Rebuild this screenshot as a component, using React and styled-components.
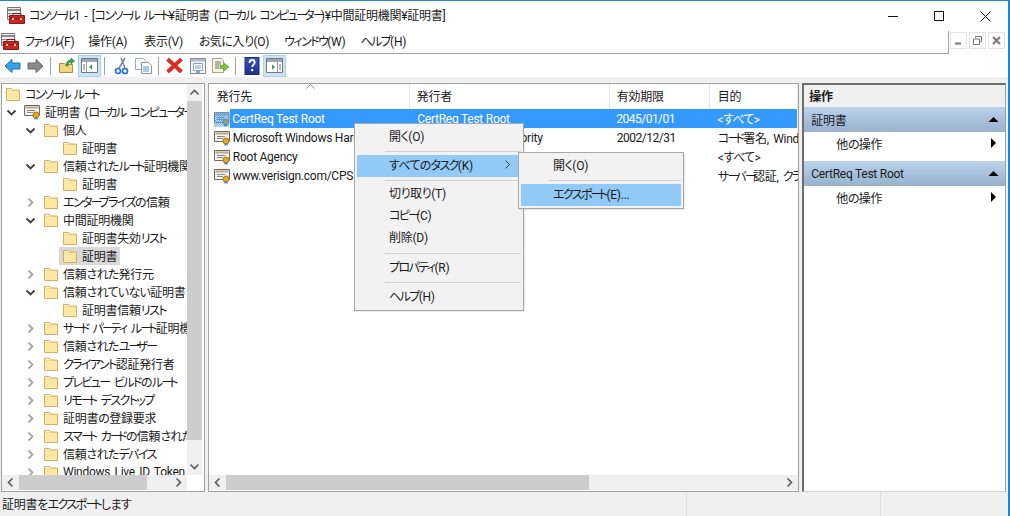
import React from 'react';
import styled, { createGlobalStyle } from 'styled-components';

const GlobalStyle = createGlobalStyle`
  html, body {
    margin: 0;
    padding: 0;
    overflow: hidden;
    background: #fff;
  }
`;

const Window = styled.div`
  position: relative;
  box-sizing: border-box;
  width: 1010px;
  height: 516px;
  display: flex;
  flex-direction: column;
  overflow: hidden;
  background: #fff;
  border-top: 1px solid #1a8ad4;
  border-right: 2px solid #1a8ad4;
  font-family: Roboto, "Noto Sans CJK JP", sans-serif;
  font-size: 12px;
  font-feature-settings: "palt";
  letter-spacing: -0.25px;
  color: #1a1a1a;
  white-space: nowrap;
`;

const JpText = styled.span`
  word-spacing: 1.5px;
`;

const Kana = styled.span`
  letter-spacing: ${(p) => p.$sp}px;
`;

// Meiryo UI has much narrower kana than its kanji, so kana runs get tightened
const Jp = ({ children }) => (
  <JpText>
    {children.split(/(ー+|[\u30A0-\u30FB\u30FD-\u30FF]+|[\u3040-\u309F]+)/).map((part, i, all) => {
      if (part[0] === 'ー') {
        const beforeSpace = all[i + 1] && all[i + 1][0] === ' ';
        return <Kana key={i} $sp={beforeSpace ? -1.5 : -4}>{part}</Kana>;
      }
      if (/^[\u30A0-\u30FF]/.test(part)) return <Kana key={i} $sp={-1.6}>{part}</Kana>;
      if (/^[\u3040-\u309F]/.test(part)) return <Kana key={i} $sp={-0.7}>{part}</Kana>;
      return part;
    })}
  </JpText>
);

const TitleBar = styled.div`
  height: 30px;
  flex: none;
  display: flex;
  align-items: center;
  padding-left: 7px;
`;

const TitleText = styled.div`
  flex: 1;
  padding: 0 0 3px 4px;
`;

const WinButton = styled.div`
  width: 46px;
  height: 30px;
  display: flex;
  align-items: center;
  justify-content: center;
`;

const MenuBar = styled.div`
  height: 22px;
  flex: none;
  display: flex;
  align-items: center;
  border-bottom: 1px solid #a0a0aa;
  margin-right: 59px;
  border-right: 1px solid #a0a0aa;
  padding-left: 1px;
  position: relative;
`;

const MenuItem = styled.div`
  margin-left: ${(p) => p.$gap}px;
  padding-bottom: 3px;
`;

const MdiButtons = styled.div`
  position: absolute;
  right: -57px;
  top: 1px;
  display: flex;
  gap: 2px;
`;

const MdiButton = styled.div`
  box-sizing: border-box;
  width: 17px;
  height: 17px;
  border: 1px solid #e4e4e4;
  display: flex;
  align-items: center;
  justify-content: center;
`;

const Toolbar = styled.div`
  height: 23px;
  flex: none;
  display: flex;
  align-items: center;
  padding-left: 1px;
`;

const ToolButton = styled.div`
  box-sizing: border-box;
  width: 23px;
  height: 22px;
  display: flex;
  align-items: center;
  justify-content: center;
  ${(p) => p.$active && 'background: #cce4f7; border: 1px solid #a6d2f3;'}
`;

const ToolSep = styled.div`
  width: 1px;
  height: 18px;
  margin: 0 4px 0 3px;
  background: #a0a0a0;
`;

const Main = styled.div`
  flex: 1;
  min-height: 0;
  display: flex;
  gap: 3px;
  background: #f0f0f0;
  padding: 6px 2px 0 1px;
`;

const Pane = styled.div`
  position: relative;
  box-sizing: border-box;
  display: flex;
  flex-direction: column;
  background: #fff;
  border: 1px solid #a0a0a0;
  width: ${(p) => p.$w}px;
  overflow: hidden;
`;

const ScrollArea = styled.div`
  flex: 1;
  min-height: 0;
  display: flex;
`;

const TreeBody = styled.div`
  flex: 1;
  min-width: 0;
  overflow: hidden;
  padding-top: 1px;
`;

const TreeRow = styled.div`
  height: 18px;
  display: flex;
  align-items: center;
  padding-left: ${(p) => p.$level * 19 + 3}px;
`;

const Chevron = styled.div`
  flex: none;
  width: 16px;
  margin-left: -21px;
  margin-right: 5px;
  display: flex;
  justify-content: center;
`;

const TreeItem = styled.div`
  flex: none;
  height: 18px;
  display: flex;
  align-items: center;
  gap: 4px;
  ${(p) => p.$selected && 'background: #d9d9d9; margin-left: -3px; padding: 0 3px;'}
`;

const TreeLabel = styled.span`
  padding-bottom: 1px;
`;

const VScroll = styled.div`
  width: 15px;
  flex: none;
  margin-right: 2px;
  display: flex;
  flex-direction: column;
  background: #f0f0f0;
`;

const ScrollArrow = styled.div`
  flex: none;
  width: ${(p) => (p.$h ? '17px' : '100%')};
  height: ${(p) => (p.$h ? '100%' : '17px')};
  display: flex;
  align-items: center;
  justify-content: center;
`;

const VThumb = styled.div`
  height: 339px;
  flex: none;
  background: #cdcdcd;
`;

const Spacer = styled.div`
  flex: 1;
`;

const HScroll = styled.div`
  height: 15px;
  flex: none;
  margin: 0 ${(p) => p.$end}px 1px 0;
  display: flex;
  background: #f0f0f0;
`;

const HThumb = styled.div`
  width: ${(p) => p.$w}px;
  flex: none;
  background: #cdcdcd;
`;

const ListHeader = styled.div`
  height: 25px;
  flex: none;
  display: flex;
  position: relative;
`;

const HeaderCell = styled.div`
  box-sizing: border-box;
  width: ${(p) => p.$w}px;
  flex: none;
  padding: 0 0 3px ${(p) => p.$pad}px;
  display: flex;
  align-items: center;
  border-right: 1px solid #e5e5e5;
`;

const SortCaret = styled.svg`
  position: absolute;
  left: 97px;
  top: 0;
`;

const ListBody = styled.div`
  flex: 1;
  min-height: 0;
  overflow: hidden;
`;

const ListRow = styled.div`
  height: 19px;
  display: flex;
  align-items: center;
  padding-left: 5px;
  position: relative;
`;

const RowCells = styled.div`
  display: flex;
  align-items: center;
  height: 100%;
  flex: 1;
  padding-left: 2px;
  ${(p) => p.$selected && 'background: #3399ff; color: #fff; margin-right: 1px;'}
`;

const ListCell = styled.div`
  box-sizing: border-box;
  width: ${(p) => p.$w}px;
  flex: none;
  overflow: hidden;
  ${(p) => p.$tight && 'letter-spacing: -0.5px;'}
`;

const ActionPane = styled(Pane)`
  border-left: 2px solid #6d6d6d;
  border-top: 2px solid #6d6d6d;
  border-right-color: #a0a0a0;
  border-bottom-color: #d0d0d0;
`;

const ActionTitle = styled.div`
  height: 22px;
  flex: none;
  display: flex;
  align-items: center;
  padding: 0 0 1px 5px;
  box-sizing: border-box;
  background: #f0f0f0;
  font-weight: 700;
`;

const ActionHeader = styled.div`
  height: 25px;
  flex: none;
  display: flex;
  align-items: center;
  justify-content: space-between;
  padding: 0 6px 0 7px;
  background: linear-gradient(#bad2ea, #98b1cd);
  margin-top: ${(p) => p.$top}px;
`;

const ActionItem = styled.div`
  box-sizing: border-box;
  height: 24px;
  flex: none;
  display: flex;
  align-items: center;
  justify-content: space-between;
  padding: 0 6px 1px 32px;
`;

const StatusBar = styled.div`
  height: 24px;
  flex: none;
  display: flex;
  align-items: center;
  background: #f0f0f0;
  padding-left: 2px;
  position: relative;
`;

const StatusText = styled.div`
  width: 684px;
  flex: none;
  padding-bottom: 1px;
`;

const StatusDivider = styled.div`
  width: 1px;
  height: 100%;
  background: #e0e0e0;
  margin-right: ${(p) => p.$after}px;
`;

const PopupMenu = styled.div`
  position: absolute;
  box-sizing: border-box;
  left: ${(p) => p.$x}px;
  top: ${(p) => p.$y}px;
  width: ${(p) => p.$w}px;
  background: #f2f2f2;
  border: 1px solid #a8a8a8;
  padding: 2px;
  color: #1a1a1a;
  box-shadow: 1px 1px 1px rgba(0, 0, 0, 0.08);
`;

const PopupItem = styled.div`
  box-sizing: border-box;
  height: 22px;
  display: flex;
  align-items: center;
  justify-content: space-between;
  padding: 0 8px 3px 32px;
  ${(p) => p.$active && 'background: #91c9f7;'}
`;

const PopupSep = styled.div`
  height: 1px;
  margin: ${(p) => p.$top}px 0 ${(p) => p.$bottom}px 28px;
  background: #d0d0d0;
`;

const Folder = () => (
  <svg width="16" height="16" viewBox="0 0 16 16">
    <path d="M1.5 2.500h5l1 1.500h7v10.500h-13z" fill="#f8dc8e" stroke="#d2b061" />
    <path d="M2 5h12v9H2z" fill="#fbe7a6" />
    <path d="M2 3h4.300l1 1H2z" fill="#fff3cc" />
  </svg>
);

const Cert = ({ faded }) => (
  <svg width="17" height="16" viewBox="0 0 17 16">
    <defs>
      <pattern id="certDither" width="2" height="2" patternUnits="userSpaceOnUse">
        <rect width="1" height="1" fill="#3399ff" />
        <rect x="1" y="1" width="1" height="1" fill="#3399ff" />
      </pattern>
    </defs>
    <path d="M.5 1.500h15v10H.5z" fill="#f7f3ea" stroke="#6f6a62" />
    <path d="M1.500 2.500h13v2h-13z" fill="#b6a890" />
    <path d="M3 6.500h8M3 8.500h6" stroke="#7a8aa5" />
    <circle cx="12" cy="11" r="3" fill="#e8a422" stroke="#b67a10" />
    <path d="M10.500 13.500v2.500l1.500-1 1.500 1v-2.500" fill="#3a7fc4" />
    {faded && <path d="M0 1h16v15H0z" fill="url(#certDither)" />}
  </svg>
);

const MmcIcon = () => (
  <svg width="18" height="18" viewBox="0 0 18 18">
    <path d="M.5.500h13v12H.5z" fill="#eee" stroke="#777" />
    <path d="M1 2h12v2H1zM1 6h12v1H1zM1 9h12v1H1z" fill="#8a8a8a" />
    <path d="M2.500 8.500h15v8h-15z" fill="#c8242a" stroke="#8a1a1e" />
    <path d="M6 8.500v-2h8v2" fill="none" stroke="#8a1a1e" />
    <path d="M2.500 11.500h15" stroke="#8a1a1e" />
    <rect x="5" y="11" width="2" height="2" fill="#f0d060" />
    <rect x="13" y="11" width="2" height="2" fill="#f0d060" />
  </svg>
);

const Arrow = ({ dir, fill, stroke }) => (
  <svg width="17" height="16" viewBox="0 0 17 16">
    <path
      d={dir === 'left' ? 'M1 8l7-6.500v3.500h8v6H8v3.500z' : 'M16 8L9 1.500V5H1v6h8v3.500z'}
      fill={fill}
      stroke={stroke}
    />
  </svg>
);

const PanelIcon = ({ right }) => (
  <svg width="17" height="15" viewBox="0 0 17 15">
    <path d="M.5.500h16v14H.5z" fill="#fff" stroke="#767676" />
    <path d="M1 1h15v3H1z" fill="#9aa7b8" />
    <path d={right ? 'M11.500 4v10' : 'M5.500 4v10'} stroke="#9a9a9a" />
    <path d={right ? 'M6 6.500l3 2.500-3 2.500z' : 'M11 6.500l-3 2.500 3 2.500z'} fill="#2f9a3a" />
    <path d={right ? 'M13 7h2M13 9h2M13 11h2' : 'M2 7h2M2 9h2M2 11h2'} stroke="#6a6a6a" />
  </svg>
);

const ToolIcons = {
  up: (
    <svg width="17" height="17" viewBox="0 0 17 17">
      <path d="M1.500 6.500h5l1 1h7v8h-13z" fill="#f4d57e" stroke="#b08e3e" />
      <path d="M8 9c0-4 2-6 5-6V1l3.500 3L13 7V5c-2 0-3 1.500-3 4z" fill="#3aa53c" stroke="#2a7a2c" strokeWidth=".6" />
    </svg>
  ),
  cut: (
    <svg width="16" height="18" viewBox="0 0 16 18">
      <path d="M12 1L6 11M8 1l4 10" stroke="#7c8794" strokeWidth="1.500" fill="none" />
      <circle cx="5" cy="14" r="2.500" fill="none" stroke="#1e73d2" strokeWidth="1.700" />
      <circle cx="12" cy="14" r="2.500" fill="none" stroke="#1e73d2" strokeWidth="1.700" />
    </svg>
  ),
  copy: (
    <svg width="17" height="16" viewBox="0 0 17 16">
      <path d="M.5.500h8l2 2v9H.5z" fill="#fafafa" stroke="#a3aab5" />
      <path d="M6.500 4.500h7l3 3v8h-10z" fill="#fff" stroke="#8c96a6" />
      <path d="M8 9h6M8 11h6M8 13h6" stroke="#5d8fc8" />
    </svg>
  ),
  del: (
    <svg width="17" height="17" viewBox="0 0 17 17">
      <path d="M3 1l5.500 5L14 1l2.500 2.500L11 8.500l5.500 5L14 16l-5.500-5L3 16 .5 13.500 6 8.500.5 3.500z" fill="#de2a24" stroke="#b01e1a" strokeWidth=".5" />
    </svg>
  ),
  props: (
    <svg width="16" height="16" viewBox="0 0 16 16">
      <path d="M.5.500h15v15H.5z" fill="#f4f4f4" stroke="#8a8a8a" />
      <path d="M1 1h14v2.500H1z" fill="#b4bac6" />
      <path d="M3.500 5.500h9v7h-9z" fill="#fff" stroke="#8fa2bd" />
      <path d="M5 8h6M5 10h6" stroke="#7fa2cf" />
      <path d="M6 14h4" stroke="#3f9ad8" strokeWidth="1.500" />
    </svg>
  ),
  exportList: (
    <svg width="17" height="16" viewBox="0 0 17 16">
      <path d="M.5.500h9l2 2v12H.5z" fill="#fbf5e2" stroke="#a8a08a" />
      <path d="M3 4h6M3 6h6M3 8h4M3 10h4" stroke="#6e6e6e" />
      <path d="M8 7.500h4V5l5 4-5 4v-2.500H8z" fill="#7ec63a" stroke="#4c9a22" strokeWidth=".6" />
    </svg>
  ),
  help: (
    <svg width="16" height="18" viewBox="0 0 16 18">
      <defs>
        <linearGradient id="helpFill" x1="0" y1="0" x2="0" y2="1">
          <stop offset="0" stopColor="#3d55b8" />
          <stop offset="1" stopColor="#1c2f8c" />
        </linearGradient>
      </defs>
      <rect x="1" y="0.500" width="14" height="17" fill="url(#helpFill)" stroke="#1a2a70" />
      <path d="M5.500 6c0-2 1.200-3 2.700-3s2.500 1 2.500 2.500c0 2-2.500 2.200-2.500 4.500" fill="none" stroke="#fff" strokeWidth="1.800" />
      <rect x="7.200" y="12" width="2" height="2.200" fill="#fff" />
    </svg>
  ),
};

const Chev = ({ dir, color = '#5a5a5a', w = 1.6 }) => {
  const d = {
    down: 'M1.500 3.500L5.500 7.500 9.500 3.500',
    right: 'M3.500 1.500L7.500 5.500 3.500 9.500',
    left: 'M7.500 1.500L3.500 5.500 7.500 9.500',
    up: 'M1.500 7.500L5.500 3.500 9.500 7.500',
  }[dir];
  return (
    <svg width="11" height="11" viewBox="0 0 11 11">
      <path d={d} fill="none" stroke={color} strokeWidth={w} />
    </svg>
  );
};

const Tri = ({ up }) => (
  <svg width="11" height="11" viewBox="0 0 11 11">
    <path d={up ? 'M.5 8L5.500 3l5 5z' : 'M3 0v10l5-5z'} fill="#000" />
  </svg>
);

const menus = [
  ['ファイル(F)', 6],
  ['操作(A)', 14],
  ['表示(V)', 17],
  ['お気に入り(O)', 16],
  ['ウィンドウ(W)', 15],
  ['ヘルプ(H)', 15],
];

const tree = [
  { level: 0, label: 'コンソール ルート' },
  { level: 1, label: '証明書 (ローカル コンピューター)', open: true, cert: true },
  { level: 2, label: '個人', open: true },
  { level: 3, label: '証明書' },
  { level: 2, label: '信頼されたルート証明機関', open: true },
  { level: 3, label: '証明書' },
  { level: 2, label: 'エンタープライズの信頼', closed: true },
  { level: 2, label: '中間証明機関', open: true },
  { level: 3, label: '証明書失効リスト' },
  { level: 3, label: '証明書', selected: true },
  { level: 2, label: '信頼された発行元', closed: true },
  { level: 2, label: '信頼されていない証明書', open: true },
  { level: 3, label: '証明書信頼リスト' },
  { level: 2, label: 'サード パーティ ルート証明機関', closed: true },
  { level: 2, label: '信頼されたユーザー', closed: true },
  { level: 2, label: 'クライアント認証発行者', closed: true },
  { level: 2, label: 'プレビュー ビルドのルート', closed: true },
  { level: 2, label: 'リモート デスクトップ', closed: true },
  { level: 2, label: '証明書の登録要求', closed: true },
  { level: 2, label: 'スマート カードの信頼されたルート', closed: true },
  { level: 2, label: '信頼されたデバイス', closed: true },
  { level: 2, label: 'Windows Live ID Token Issuer', closed: true },
];

const columns = [
  { label: '発行先', w: 201, pad: 8 },
  { label: '発行者', w: 200, pad: 7 },
  { label: '有効期限', w: 100, pad: 7 },
  { label: '目的', w: 88, pad: 8 },
];

const rows = [
  { to: 'CertReq Test Root', by: 'CertReq Test Root', date: '2045/01/01', use: '<すべて>', selected: true },
  { to: 'Microsoft Windows Hardware Compatibility', by: 'Microsoft Root Authority', date: '2002/12/31', use: 'コード署名, Windows' },
  { to: 'Root Agency', by: 'Root Agency', date: '', use: '<すべて>' },
  { to: 'www.verisign.com/CPS Incorp.', by: 'Class 3 Public', date: '', use: 'サーバー認証, クライアント' },
];

export default function App() {
  return (
    <Window>
      <GlobalStyle />
      <TitleBar>
        <MmcIcon />
        <TitleText><Jp>コンソール1 - [コンソール ルート¥証明書 (ローカル コンピューター)¥中間証明機関¥証明書]</Jp></TitleText>
        <WinButton>
          <svg width="11" height="11" viewBox="0 0 11 11"><path d="M0 5.500h10" stroke="#111" /></svg>
        </WinButton>
        <WinButton>
          <svg width="11" height="11" viewBox="0 0 11 11"><path d="M.5.500h9v9h-9z" fill="none" stroke="#111" /></svg>
        </WinButton>
        <WinButton>
          <svg width="11" height="11" viewBox="0 0 11 11"><path d="M.5.500l10 10M10.500.500l-10 10" stroke="#111" /></svg>
        </WinButton>
      </TitleBar>
      <MenuBar>
        <MmcIcon />
        {menus.map(([label, gap]) => (
          <MenuItem key={label} $gap={gap}><Jp>{label}</Jp></MenuItem>
        ))}
        <MdiButtons>
          <MdiButton>
            <svg width="9" height="9" viewBox="0 0 9 9"><path d="M1 7.500h6" stroke="#777" strokeWidth="2" /></svg>
          </MdiButton>
          <MdiButton>
            <svg width="11" height="11" viewBox="0 0 11 11"><path d="M3.500 3V1.500h6v5H8M1.500 4h6v5.500h-6z" fill="none" stroke="#777" /></svg>
          </MdiButton>
          <MdiButton>
            <svg width="9" height="9" viewBox="0 0 9 9"><path d="M1 1l7 7M8 1L1 8" stroke="#777" strokeWidth="2" /></svg>
          </MdiButton>
        </MdiButtons>
      </MenuBar>
      <Toolbar>
        <ToolButton><Arrow dir="left" fill="#36a2ea" stroke="#1c6fb8" /></ToolButton>
        <ToolButton><Arrow dir="right" fill="#8a8a8a" stroke="#666" /></ToolButton>
        <ToolSep />
        <ToolButton>{ToolIcons.up}</ToolButton>
        <ToolButton $active><PanelIcon /></ToolButton>
        <ToolSep />
        <ToolButton>{ToolIcons.cut}</ToolButton>
        <ToolButton>{ToolIcons.copy}</ToolButton>
        <ToolSep />
        <ToolButton>{ToolIcons.del}</ToolButton>
        <ToolButton>{ToolIcons.props}</ToolButton>
        <ToolButton>{ToolIcons.exportList}</ToolButton>
        <ToolSep />
        <ToolButton>{ToolIcons.help}</ToolButton>
        <ToolButton $active><PanelIcon right /></ToolButton>
      </Toolbar>
      <Main>
        <Pane $w={204}>
          <ScrollArea>
            <TreeBody>
              {tree.map((item, i) => (
                <TreeRow key={i} $level={item.level}>
                  {(item.open || item.closed) && (
                    <Chevron>
                      {item.open ? <Chev dir="down" color="#404040" w={1.8} /> : <Chev dir="right" color="#a6a6a6" w={1.8} />}
                    </Chevron>
                  )}
                  <TreeItem $selected={item.selected}>
                    {item.cert ? <Cert /> : <Folder />}
                    <TreeLabel><Jp>{item.label}</Jp></TreeLabel>
                  </TreeItem>
                </TreeRow>
              ))}
            </TreeBody>
            <VScroll>
              <ScrollArrow><Chev dir="up" /></ScrollArrow>
              <VThumb />
              <Spacer />
              <ScrollArrow><Chev dir="down" /></ScrollArrow>
            </VScroll>
          </ScrollArea>
          <HScroll $end={17}>
            <ScrollArrow $h><Chev dir="left" /></ScrollArrow>
            <HThumb $w={128} />
            <Spacer />
            <ScrollArrow $h><Chev dir="right" /></ScrollArrow>
          </HScroll>
        </Pane>
        <Pane $w={592}>
          <ListHeader>
            {columns.map((c) => (
              <HeaderCell key={c.label} $w={c.w} $pad={c.pad}>{c.label}</HeaderCell>
            ))}
            <SortCaret width="9" height="5" viewBox="0 0 9 5">
              <path d="M.5 4.500l4-4 4 4" fill="none" stroke="#8a8a8a" />
            </SortCaret>
          </ListHeader>
          <ListBody>
            {rows.map((r) => (
              <ListRow key={r.to}>
                <Cert faded={r.selected} />
                <RowCells $selected={r.selected}>
                  <ListCell $w={185}>{r.to}</ListCell>
                  <ListCell $w={199}>{r.by}</ListCell>
                  <ListCell $w={101} $tight>{r.date}</ListCell>
                  <ListCell $w={80}><Jp>{r.use}</Jp></ListCell>
                </RowCells>
              </ListRow>
            ))}
          </ListBody>
          <HScroll $end={0}>
            <ScrollArrow $h><Chev dir="left" /></ScrollArrow>
            <HThumb $w={363} />
            <Spacer />
            <ScrollArrow $h><Chev dir="right" /></ScrollArrow>
          </HScroll>
        </Pane>
        <ActionPane $w={204}>
          <ActionTitle>操作</ActionTitle>
          <ActionHeader $top={0}>証明書<Tri up /></ActionHeader>
          <ActionItem><Jp>他の操作</Jp><Tri /></ActionItem>
          <ActionHeader $top={5}>CertReq Test Root<Tri up /></ActionHeader>
          <ActionItem><Jp>他の操作</Jp><Tri /></ActionItem>
        </ActionPane>
      </Main>
      <StatusBar>
        <StatusText><Jp>証明書をエクスポートします</Jp></StatusText>
        <StatusDivider $after={193} />
        <StatusDivider $after={125} />
      </StatusBar>
      <PopupMenu $x={354} $y={122} $w={170}>
        <PopupItem><Jp>開く(O)</Jp></PopupItem>
        <PopupSep $top={3} $bottom={3} />
        <PopupItem $active><Jp>すべてのタスク(K)</Jp><Chev dir="right" color="#404040" w={1} /></PopupItem>
        <PopupSep $top={3} $bottom={2} />
        <PopupItem><Jp>切り取り(T)</Jp></PopupItem>
        <PopupItem><Jp>コピー(C)</Jp></PopupItem>
        <PopupItem>削除(D)</PopupItem>
        <PopupSep $top={3.5} $bottom={3.5} />
        <PopupItem><Jp>プロパティ(R)</Jp></PopupItem>
        <PopupSep $top={3} $bottom={3} />
        <PopupItem><Jp>ヘルプ(H)</Jp></PopupItem>
      </PopupMenu>
      <PopupMenu $x={518} $y={151} $w={166}>
        <PopupItem><Jp>開く(O)</Jp></PopupItem>
        <PopupSep $top={3} $bottom={3} />
        <PopupItem $active><Jp>エクスポート(E)...</Jp></PopupItem>
      </PopupMenu>
    </Window>
  );
}
